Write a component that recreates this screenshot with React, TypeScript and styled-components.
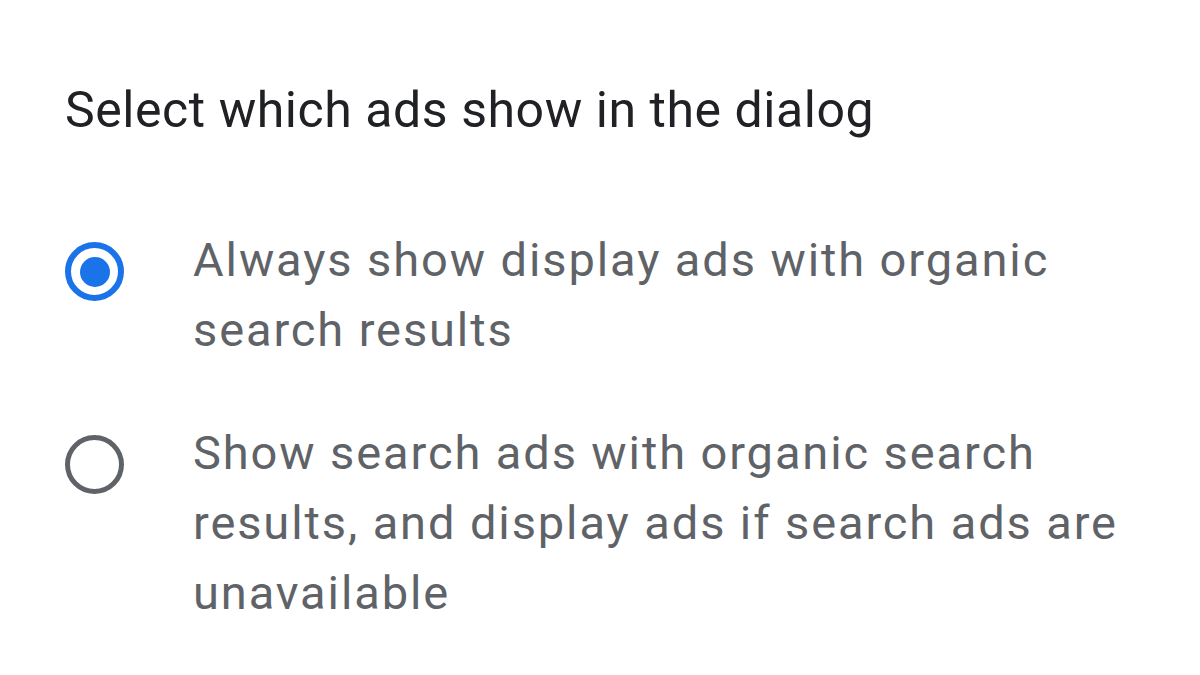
import React, { useState } from "react";
import styled, { createGlobalStyle } from "styled-components";

const GlobalStyle = createGlobalStyle`
  html, body {
    margin: 0;
    padding: 0;
    background: #ffffff;
  }
  body {
    font-family: Roboto, "Noto Sans", Arial, sans-serif;
  }
`;

const options = [
  { id: "display", label: "Always show display ads with organic search results" },
  {
    id: "search",
    label:
      "Show search ads with organic search results, and display ads if search ads are unavailable",
  },
];

const App = () => {
  const [selected, setSelected] = useState("display");

  return (
    <>
      <GlobalStyle />
      <PanelStyle>
        <TitleStyle>Select which ads show in the dialog</TitleStyle>
        <ListStyle role="radiogroup">
          {options.map((option) => (
            <OptionStyle
              key={option.id}
              role="radio"
              aria-checked={selected === option.id}
              onClick={() => setSelected(option.id)}
            >
              <RadioBoxStyle>
                <RadioStyle checked={selected === option.id} />
              </RadioBoxStyle>
              <LabelStyle>{option.label}</LabelStyle>
            </OptionStyle>
          ))}
        </ListStyle>
      </PanelStyle>
    </>
  );
};

export default App;

const PanelStyle = styled.div`
  width: 1200px;
  height: 675px;
  box-sizing: border-box;
  padding: 80px 0 0 65px;
`;

const TitleStyle = styled.h2`
  margin: 0;
  font-size: 50px;
  font-weight: 400;
  line-height: 60px;
  letter-spacing: 0.55px;
  color: #202124;
`;

const ListStyle = styled.div`
  display: flex;
  flex-direction: column;
  gap: 53px;
  margin-top: 85px;
`;

const OptionStyle = styled.div`
  display: flex;
  align-items: flex-start;
  cursor: pointer;
`;

const RadioBoxStyle = styled.div`
  width: 128px;
  flex-shrink: 0;
  display: flex;
  padding-top: 17px;
`;

const RadioStyle = styled.span<{ checked: boolean }>`
  width: 59px;
  height: 59px;
  box-sizing: border-box;
  border-radius: 50%;
  border: ${(p) => (p.checked ? "6px solid #1a73e8" : "5px solid #5f6368")};
  display: flex;
  align-items: center;
  justify-content: center;

  &::after {
    content: "";
    width: 30px;
    height: 30px;
    border-radius: 50%;
    background: #1a73e8;
    display: ${(p) => (p.checked ? "block" : "none")};
  }
`;

const LabelStyle = styled.div`
  width: 935px;
  font-size: 47px;
  line-height: 70px;
  letter-spacing: 1.9px;
  color: #5f6368;
`;
